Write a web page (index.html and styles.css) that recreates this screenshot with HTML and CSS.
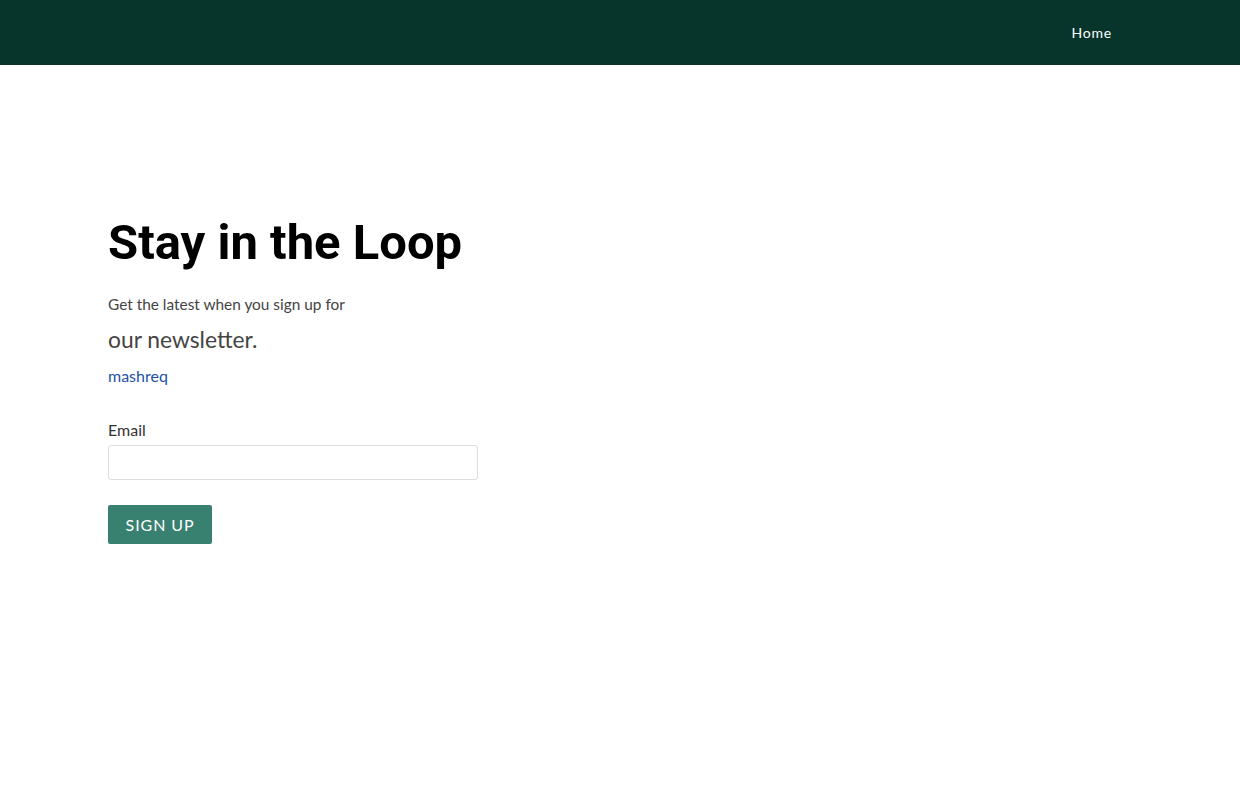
FILE: index.html
```html
<!DOCTYPE html>
<html>
<head>
<meta charset="utf-8">
<link rel="stylesheet" href="styles.css">
</head>
<body>
<header class="topbar">
  <nav class="nav"><a class="nav-link" href="#">Home</a></nav>
</header>
<main class="content">
  <h1 class="title">Stay in the Loop</h1>
  <p class="lead">Get the latest when you sign up for</p>
  <p class="lead-big">our newsletter.</p>
  <a class="brand-link" href="#">mashreq</a>
  <form class="form">
    <label class="label" for="email">Email</label>
    <input class="input" id="email" type="email">
    <button class="btn" type="button">SIGN UP</button>
  </form>
</main>
</body>
</html>
```
FILE: styles.css
```css
* { box-sizing: border-box; }
html, body { margin: 0; padding: 0; background: #fff; }
body { font-family: Lato, "Open Sans", sans-serif; color: #444; }
.topbar {
  height: 65px;
  background: #07352c;
  display: flex;
  justify-content: flex-end;
  align-items: center;
  padding-right: 128px;
}
.nav { display: flex; }
.nav-link {
  color: #fff;
  text-decoration: none;
  font-family: Lato, sans-serif;
  font-size: 14px;
  letter-spacing: 0.8px;
  line-height: 20px;
}
.content {
  padding: 148px 108px 0;
  display: flex;
  flex-direction: column;
  align-items: flex-start;
}
.title {
  font-family: Roboto, sans-serif;
  font-weight: 700;
  font-size: 49px;
  line-height: 60px;
  margin: 0 0 19px;
  color: #000;
}
.lead {
  margin: 0;
  font-size: 15.4px;
  line-height: 24px;
  color: #444;
}
.lead-big {
  margin: 8px 0 0;
  font-size: 22.8px;
  line-height: 30px;
  color: #444;
}
.brand-link {
  margin-top: 10px;
  font-size: 16px;
  line-height: 24px;
  color: #1d52a8;
  text-decoration: none;
}
.form {
  margin-top: 30px;
  display: flex;
  flex-direction: column;
  align-items: flex-start;
}
.label {
  font-size: 16px;
  line-height: 24px;
  color: #333;
  margin-bottom: 3px;
}
.input {
  width: 370px;
  height: 35px;
  border: 1px solid #ddd;
  border-radius: 3px;
  padding: 0 10px;
  font-size: 16px;
}
.btn {
  margin-top: 25px;
  width: 104px;
  height: 39px;
  background: #38806f;
  color: #fff;
  border: none;
  border-radius: 2px;
  font-family: Lato, sans-serif;
  font-size: 16px;
  letter-spacing: 0.9px;
  padding: 0;
}
```
